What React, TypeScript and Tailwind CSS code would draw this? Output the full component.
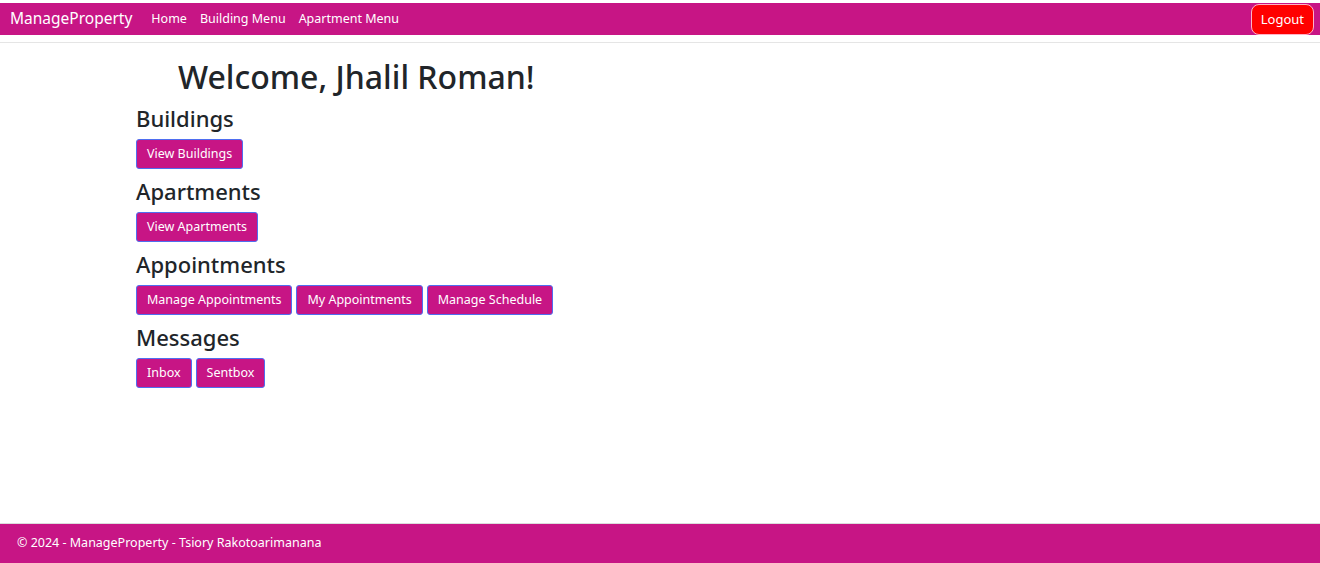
const Btn = ({ label }: { label: string }) => (
  <button className="h-[30px] px-[10px] rounded-[3px] border border-[#4f6ef0] bg-[#c71585] text-white text-[12.5px] leading-none">
    {label}
  </button>
);

const Section = ({ title, buttons }: { title: string; buttons: string[] }) => (
  <div className="mb-[8px]">
    <h3 className="text-[22px] font-medium leading-[29px] text-[#212529] mb-[6px]">{title}</h3>
    <div className="flex gap-[4px]">
      {buttons.map((b) => (
        <Btn key={b} label={b} />
      ))}
    </div>
  </div>
);

const App = () => {
  return (
    <div
      className="min-h-[563px] flex flex-col bg-white"
      style={{ fontFamily: '"Noto Sans", "Open Sans", sans-serif' }}
    >
      <header className="pt-[3px] h-[43px] border-b border-[#e5e5e5]">
        <nav className="h-[32px] bg-[#c71585] text-white flex items-center justify-between pl-[10px] pr-[6px]">
          <div className="flex items-center">
            <span className="text-[15.5px] mr-[19px]">ManageProperty</span>
            <ul className="flex items-center gap-[13px] text-[12.5px]">
              <li>Home</li>
              <li>Building Menu</li>
              <li>Apartment Menu</li>
            </ul>
          </div>
          <button className="h-[31px] mt-[1px] px-[9px] rounded-[8px] border border-[#ffb3c6] bg-[#ff0000] text-white text-[13px]">
            Logout
          </button>
        </nav>
      </header>

      <main className="flex-1 pl-[136px] pt-[13px]">
        <h1 className="pl-[42px] text-[32px] font-medium leading-[42px] text-[#212529] mb-[6px]">
          Welcome, Jhalil Roman!
        </h1>
        <Section title="Buildings" buttons={['View Buildings']} />
        <Section title="Apartments" buttons={['View Apartments']} />
        <Section
          title="Appointments"
          buttons={['Manage Appointments', 'My Appointments', 'Manage Schedule']}
        />
        <Section title="Messages" buttons={['Inbox', 'Sentbox']} />
      </main>

      <footer className="h-[40px] border-t border-[#dcdcdc] bg-[#c71585] text-white text-[12.5px] flex items-center pl-[17px]">
        © 2024 - ManageProperty - Tsiory Rakotoarimanana
      </footer>
    </div>
  );
};

export default App;
